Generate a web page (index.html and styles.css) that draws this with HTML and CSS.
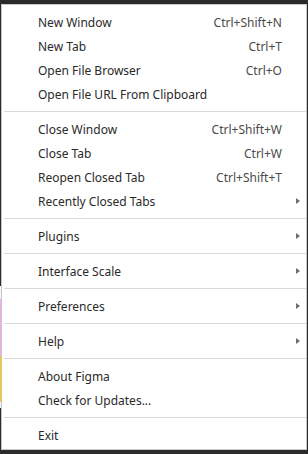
FILE: index.html
```html
<!DOCTYPE html>
<html>
<head>
    <title>Figma Menu</title>
    <link rel="stylesheet" href="styles.css">
</head>
<body>
    <div class="desktop">
        <div class="edge"></div>
        <div class="menu">
            <div class="item"><span class="label">New Window</span><span class="keys">Ctrl+Shift+N</span></div>
            <div class="item"><span class="label">New Tab</span><span class="keys">Ctrl+T</span></div>
            <div class="item"><span class="label">Open File Browser</span><span class="keys">Ctrl+O</span></div>
            <div class="item"><span class="label">Open File URL From Clipboard</span></div>
            <div class="sep"></div>
            <div class="item"><span class="label">Close Window</span><span class="keys">Ctrl+Shift+W</span></div>
            <div class="item"><span class="label">Close Tab</span><span class="keys">Ctrl+W</span></div>
            <div class="item"><span class="label">Reopen Closed Tab</span><span class="keys">Ctrl+Shift+T</span></div>
            <div class="item sub"><span class="label">Recently Closed Tabs</span></div>
            <div class="sep"></div>
            <div class="item sub"><span class="label">Plugins</span></div>
            <div class="sep"></div>
            <div class="item sub"><span class="label">Interface Scale</span></div>
            <div class="sep"></div>
            <div class="item sub"><span class="label">Preferences</span></div>
            <div class="sep"></div>
            <div class="item sub"><span class="label">Help</span></div>
            <div class="sep"></div>
            <div class="item"><span class="label">About Figma</span></div>
            <div class="item"><span class="label">Check for Updates...</span></div>
            <div class="sep"></div>
            <div class="item"><span class="label">Exit</span></div>
        </div>
    </div>
</body>
</html>
```

FILE: styles.css
```css
body {
    margin: 0;
    background-color: #2b2b2b;
    font-family: "Noto Sans", sans-serif;
}

.desktop {
    display: flex;
    align-items: flex-start;
    width: 308px;
    height: 454px;
    padding-top: 4px;
    box-sizing: border-box;
}

.edge {
    width: 1px;
    margin-top: -4px;
    height: 454px;
    background: linear-gradient(#2b2b2b 0, #2b2b2b 286px, #f4f4f4 286px, #f4f4f4 299px,
        #f6a6f6 299px, #f6a6f6 356px, #ffc700 356px, #ffc700 402px,
        #f4f4f4 402px, #f4f4f4 408px, #2b2b2b 408px);
}

.menu {
    width: 304px;
    padding: 5px 0 2px 0;
    background-color: #fff;
    border: 1px solid #c9c9c9;
}

.item {
    display: flex;
    align-items: center;
    height: 24px;
    padding: 0 24px 0 36px;
    font-size: 12px;
    color: #2a2a2a;
    position: relative;
}

.label {
    flex: 1;
}

.keys {
    color: #4a4a4a;
}

.sub::after {
    content: "";
    position: absolute;
    right: 6px;
    top: 9px;
    border-left: 4px solid #6e6e6e;
    border-top: 3.5px solid transparent;
    border-bottom: 3.5px solid transparent;
}

.sep {
    height: 1px;
    margin: 5px 0 5px 2px;
    background-color: #d9d9d9;
}
```
